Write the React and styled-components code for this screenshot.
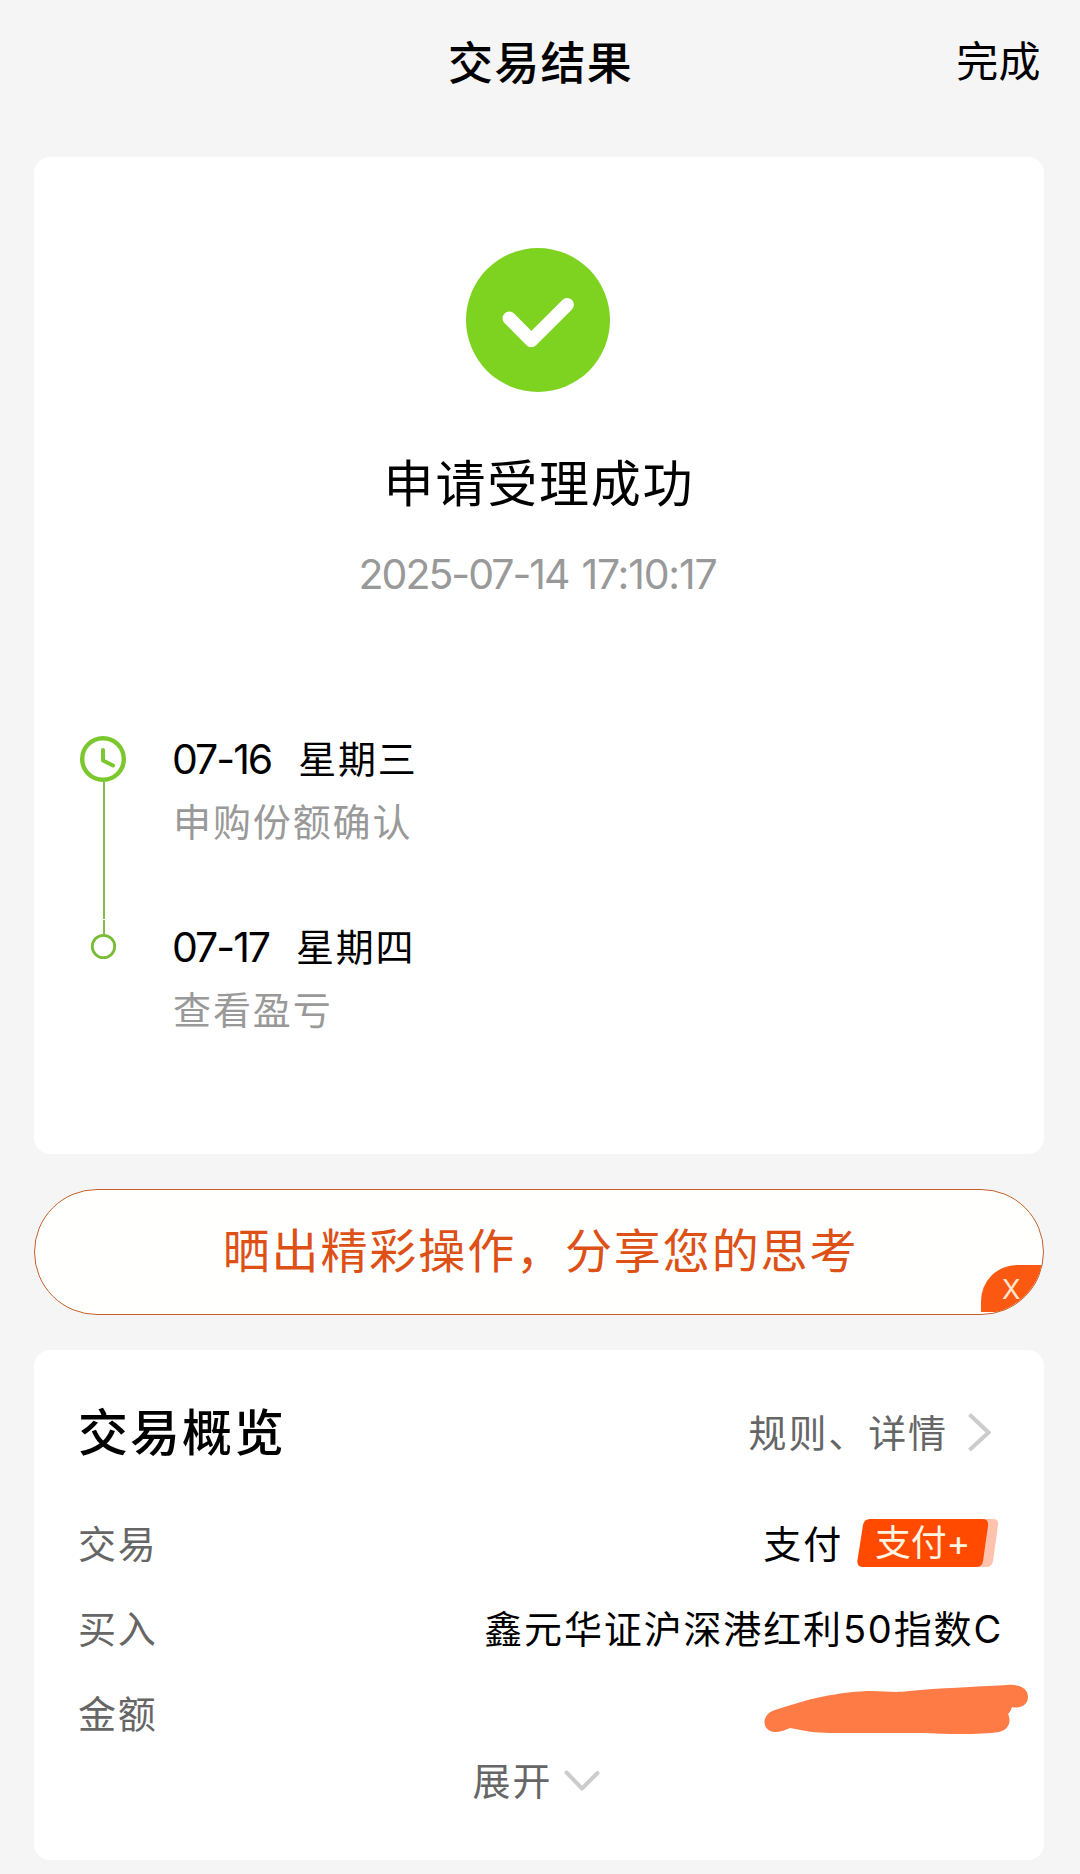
import React from "react";
import styled, { createGlobalStyle } from "styled-components";

const GlobalStyle = createGlobalStyle`
  * {
    box-sizing: border-box;
  }
  body {
    margin: 0;
    background: #f5f5f5;
    font-family: Inter, "Noto Sans CJK SC", sans-serif;
    color: #000;
  }
`;

const Page = styled.div`
  display: flex;
  flex-direction: column;
  width: 1080px;
  height: 1874px;
  padding: 0 36px 0 34px;
  overflow: hidden;
`;

const Header = styled.header`
  display: grid;
  grid-template-columns: 1fr auto 1fr;
  align-items: center;
  height: 124px;
  margin-bottom: 33px;
`;

const HeaderTitle = styled.h1`
  grid-column: 2;
  margin: 0;
  padding: 3px 0 0 3px;
  font-size: 45px;
  font-weight: 500;
  letter-spacing: 1.2px;
  line-height: 60px;
`;

const DoneButton = styled.span`
  justify-self: end;
  padding-right: 3px;
  font-size: 42px;
  letter-spacing: 0.4px;
  line-height: 60px;
`;

const Card = styled.section`
  display: flex;
  flex-direction: column;
  flex: none;
  height: ${props => props.$height}px;
  border-radius: 16px;
  background: #fff;
`;

const Summary = styled.div`
  display: flex;
  flex-direction: column;
  align-items: center;
  padding-top: 91px;
`;

const SummaryTitle = styled.div`
  margin-top: 62px;
  font-size: 50px;
  letter-spacing: 1.8px;
  line-height: 60px;
`;

const SummaryTime = styled.div`
  display: flex;
  gap: 13px;
  margin-top: 35px;
  padding-right: 3px;
  font-size: 41px;
  line-height: 50px;
  color: #999;
`;

const Digits = styled.span`
  font-size: 41px;
  letter-spacing: ${props => props.$spacing || "-2px"};
`;

const Timeline = styled.div`
  display: flex;
  margin-top: 135px;
  padding-left: 45px;
`;

const Steps = styled.div`
  display: flex;
  flex-direction: column;
  gap: 75px;
  margin-left: 43px;
`;

const Step = styled.div`
  display: flex;
  flex-direction: column;
  gap: 13px;
`;

const StepDate = styled.div`
  display: flex;
  gap: 27px;
  font-size: 38px;
  letter-spacing: 1.8px;
  line-height: 50px;
`;

const StepText = styled.div`
  padding-left: 1px;
  font-size: 38px;
  letter-spacing: 1.9px;
  line-height: 50px;
  color: #999;
`;

const ShareBar = styled.div`
  position: relative;
  display: flex;
  flex: none;
  align-items: center;
  justify-content: center;
  height: 126px;
  margin: 35px 0;
  padding: 0 0 2px 3px;
  border: 1px solid #c4602c;
  border-radius: 63px;
  background: #fffffe;
  overflow: hidden;
  font-size: 47px;
  letter-spacing: 1.9px;
  line-height: 60px;
  color: #dd5016;
`;

const ShareClose = styled.span`
  position: absolute;
  right: 0;
  bottom: 2px;
  width: 62px;
  height: 47px;
  padding-left: 21px;
  border-radius: 36px 0 0 0;
  background: #fb5912;
  font-size: 27px;
  font-weight: 400;
  line-height: 49px;
  letter-spacing: 0;
  color: #ffe8cf;
`;

const OverviewHeader = styled.div`
  display: flex;
  align-items: center;
  justify-content: space-between;
  margin: 53px 0 38px;
  padding: 0 53px 0 44px;
`;

const OverviewTitle = styled.h2`
  margin: 0;
  font-size: 50px;
  font-weight: 500;
  letter-spacing: 2px;
  line-height: 60px;
`;

const DetailLink = styled.span`
  display: flex;
  align-items: center;
  gap: 20px;
  font-size: 38px;
  letter-spacing: 1.9px;
  line-height: 50px;
  color: #666;

  svg {
    margin-bottom: 2px;
  }
`;

const Row = styled.div`
  display: flex;
  align-items: center;
  justify-content: space-between;
  height: 85px;
  padding: 0 41px 0 44px;
  font-size: 38px;
  letter-spacing: 1.85px;
  line-height: 50px;
`;

const RowLabel = styled.span`
  color: #666;
`;

const RowValue = styled.span`
  display: flex;
  align-items: center;
`;

const PayTag = styled.span`
  display: grid;
  margin: 0 3px 2px 14px;
  > * {
    grid-area: 1 / 1;
  }
`;

const PayTagText = styled.span`
  z-index: 1;
  padding: 1px 0 0 18px;
  font-size: 36px;
  letter-spacing: -0.3px;
  line-height: 47px;
  color: #fff3e2;
`;

const Scribble = styled.svg`
  margin: 0 -27px 9px 0;
`;

const Expand = styled.div`
  display: flex;
  align-items: center;
  justify-content: center;
  gap: 12px;
  padding-right: 5px;
  font-size: 38px;
  letter-spacing: 1.9px;
  line-height: 50px;
  color: #666;
`;

const SuccessIcon = () => (
  <svg width="146" height="144" viewBox="0 0 146 144">
    <circle cx="72" cy="72" r="72" fill="#7ed321" />
    <path
      d="M43.3 70.3 65.3 92.5 101.2 56.8"
      fill="none"
      stroke="#fff"
      strokeWidth="13.5"
      strokeLinecap="round"
      strokeLinejoin="round"
    />
  </svg>
);

const TimelineMarks = () => (
  <svg width="50" height="230" viewBox="0 0 50 230" fill="none">
    <circle cx="24" cy="25" r="20.8" stroke="#7ac82d" strokeWidth="4.4" />
    <path
      d="M24 16V26.5L34 31.5"
      stroke="#7ac82d"
      strokeWidth="4"
      strokeLinecap="round"
      strokeLinejoin="round"
    />
    <path d="M25 48V185M25 186V200" stroke="#82bd4e" strokeWidth="2" />
    <circle cx="24.5" cy="212.5" r="11.2" stroke="#78bd35" strokeWidth="2.8" />
  </svg>
);

const steps = [
  { day: "07-16", week: "星期三", text: "申购份额确认" },
  { day: "07-17", week: "星期四", text: "查看盈亏" }
];

const App = () => {
  return (
    <>
      <GlobalStyle />
      <Page>
        <Header>
          <HeaderTitle>交易结果</HeaderTitle>
          <DoneButton>完成</DoneButton>
        </Header>

        <Card $height={997}>
          <Summary>
            <SuccessIcon />
            <SummaryTitle>申请受理成功</SummaryTitle>
            <SummaryTime>
              <Digits>2025-07-14</Digits>
              <Digits $spacing="-1.2px">17:10:17</Digits>
            </SummaryTime>
          </Summary>
          <Timeline>
            <TimelineMarks />
            <Steps>
              {steps.map(step => (
                <Step key={step.day}>
                  <StepDate>
                    <Digits>{step.day}</Digits>
                    <span>{step.week}</span>
                  </StepDate>
                  <StepText>{step.text}</StepText>
                </Step>
              ))}
            </Steps>
          </Timeline>
        </Card>

        <ShareBar>
          晒出精彩操作，分享您的思考
          <ShareClose>X</ShareClose>
        </ShareBar>

        <Card $height={510}>
          <OverviewHeader>
            <OverviewTitle>交易概览</OverviewTitle>
            <DetailLink>
              规则、详情
              <svg width="23" height="40" viewBox="0 0 23 40" fill="none">
                <path d="M1.5 2.5 20.5 20.5 1.5 38" stroke="#ccc" strokeWidth="4" />
              </svg>
            </DetailLink>
          </OverviewHeader>
          <Row>
            <RowLabel>交易</RowLabel>
            <RowValue>
              支付
              <PayTag>
                <svg width="143" height="48" viewBox="0 0 143 48">
                  <path
                    d="M118 0H136Q142 0 141 6L136 42Q135 48 129 48H118Z"
                    fill="#ffc3ad"
                  />
                  <path
                    d="M13 0H125Q132 0 131 7L126 42Q125 48 119 48H6Q-.5 48 .5 41L6 6Q7 0 13 0Z"
                    fill="#ff4a00"
                  />
                </svg>
                <PayTagText>支付+</PayTagText>
              </PayTag>
            </RowValue>
          </Row>
          <Row>
            <RowLabel>买入</RowLabel>
            <RowValue>鑫元华证沪深港红利50指数C</RowValue>
          </Row>
          <Row>
            <RowLabel>金额</RowLabel>
            <Scribble width="266" height="52" viewBox="0 0 266 52">
              <path
                d="M11 27C27 22 42 17 57 14C76 10 94 8 108 8C122 8 131 10 145 8C175 5 211 4 243 2C256 1 264 6 264 14C264 22 256 26 248 24C247 27 246 29 244 31C248 39 244 47 235 49C215 52 182 51 158 50L82 50C67 50 53 50 42 48L26 45C21 47 17 49 11 49C-3 48-3 31 11 27Z"
                fill="#ff7b46"
              />
            </Scribble>
          </Row>
          <Expand>
            展开
            <svg width="36" height="24" viewBox="0 0 36 24" fill="none">
              <path
                d="M2.5 3.5 18 19.5 33.5 4"
                stroke="#ccc"
                strokeWidth="4"
                strokeLinecap="round"
                strokeLinejoin="round"
              />
            </svg>
          </Expand>
        </Card>
      </Page>
    </>
  );
};

export default App;
